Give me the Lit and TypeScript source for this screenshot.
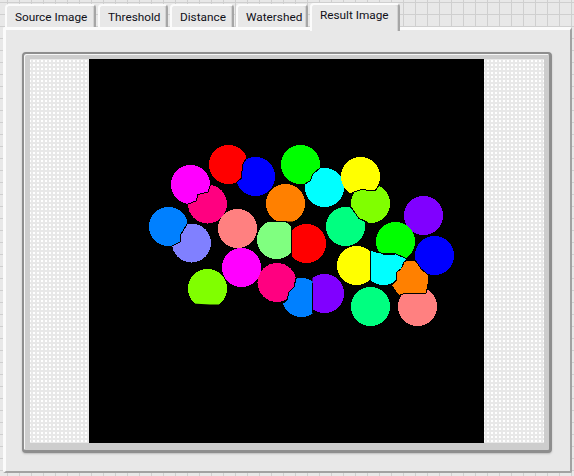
import { LitElement, html, svg, css } from "lit";
import { customElement } from "lit/decorators.js";

type Pt = [number, number];
const mk = (line: Pt[], a: Pt[], b: Pt[]) => ({ line, a: [...line, ...a], b: [...line, ...b] });

const redBlue = mk([[249, 152], [246.5, 158], [242.5, 165], [241.5, 178], [237, 182], [232, 186]], [[170, 186], [170, 120], [249, 120]], [[232, 230], [330, 230], [330, 120], [249, 120]]);
const magPink = mk([[213, 180], [210.5, 185], [208, 192], [198, 194.5], [196, 201], [188, 204], [182, 208]], [[140, 208], [140, 150], [213, 150]], [[182, 260], [260, 260], [260, 180]]);
const azPeri = mk([[189, 220], [186.5, 225], [180.5, 235], [180, 242], [172, 246], [168, 250]], [[130, 250], [130, 190], [189, 190]], [[168, 280], [230, 280], [230, 220]]);
const grnCyan = mk([[325, 165], [320, 168], [313, 174], [310, 181], [305, 184], [300, 188]], [[260, 188], [260, 130], [325, 130]], [[300, 230], [360, 230], [360, 165]]);
const yelLime = mk([[348, 195], [353, 192.5], [361.5, 189.5], [375, 191], [378, 187], [382, 182]], [[382, 140], [320, 140], [320, 195]], [[410, 182], [410, 240], [348, 240]]);
const limeSpr = mk([[347, 202], [351, 207], [356.5, 215], [359, 218.5], [365, 221], [370, 224]], [[410, 224], [410, 170], [347, 170]], [[370, 260], [300, 260], [300, 202]]);
const orLg = mk([[262, 221.5], [292, 221.5]], [[330, 221.5], [330, 170], [250, 170], [250, 221.5]], [[330, 221.5], [330, 270], [250, 270], [250, 221.5]]);
const lgRed = mk([[291.5, 215], [291.5, 270]], [[250, 270], [250, 215]], [[330, 270], [330, 215]]);
const pinkAz = mk([[298, 272], [296, 278], [294, 287], [289, 292], [287, 300], [282, 304], [278, 308]], [[240, 308], [240, 250], [298, 250]], [[278, 330], [340, 330], [340, 272]]);
const azPur = mk([[312.5, 270], [312.5, 325]], [[270, 325], [270, 270]], [[350, 325], [350, 270]]);
const yelCy = mk([[370.5, 240], [370.5, 295]], [[330, 295], [330, 240]], [[415, 295], [415, 240]]);
const grnCy = mk([[370, 250], [374, 251.5], [383, 253.5], [395, 253.5], [406, 258.5]], [[425, 258.5], [425, 215], [370, 215]], [[425, 258.5], [425, 300], [370, 300]]);

const cyanExtra: Pt[] = [[392, 254], [395, 254], [406, 259], [402, 268], [397, 272], [392, 272]];
const orangePoly: Pt[] = [[404, 262], [407, 260], [415, 260], [418, 264], [421, 269], [425, 272], [429, 275.5], [428.5, 282], [427, 289], [426, 293.5], [404, 293.5], [399.5, 295.5], [396, 292], [391.5, 285], [396.5, 280], [397, 272], [401.5, 268.5]];

type Disc = { x: number; y: number; c: string; clips?: Pt[][] };
const discs: Disc[] = [
  { x: 228.5, y: 164.5, c: "#ff0000", clips: [redBlue.a] },
  { x: 255.5, y: 176.5, c: "#0000ff", clips: [redBlue.b] },
  { x: 300.5, y: 164.5, c: "#00ff00", clips: [grnCyan.a] },
  { x: 190.5, y: 184.5, c: "#ff00ff", clips: [magPink.a] },
  { x: 207.5, y: 204, c: "#ff0080", clips: [magPink.b] },
  { x: 285.5, y: 203.5, c: "#ff8000", clips: [orLg.a] },
  { x: 168.5, y: 226.5, c: "#0080ff", clips: [azPeri.a] },
  { x: 191.5, y: 243, c: "#8080ff", clips: [azPeri.b] },
  { x: 237.5, y: 228.5, c: "#ff8080" },
  { x: 276.5, y: 239.5, c: "#80ff80", clips: [orLg.b, lgRed.a] },
  { x: 306.5, y: 243.5, c: "#ff0000", clips: [lgRed.b] },
  { x: 324.5, y: 187.5, c: "#00ffff", clips: [grnCyan.b] },
  { x: 360.5, y: 176.5, c: "#ffff00", clips: [yelLime.a] },
  { x: 370.5, y: 203.5, c: "#80ff00", clips: [yelLime.b, limeSpr.a] },
  { x: 345.5, y: 226.5, c: "#00ff80", clips: [limeSpr.b] },
  { x: 423.5, y: 215.5, c: "#8000ff" },
  { x: 395.5, y: 241.5, c: "#00ff00", clips: [grnCy.a] },
  { x: 434.5, y: 255.5, c: "#0000ff" },
  { x: 356.5, y: 265.5, c: "#ffff00", clips: [yelCy.a] },
  { x: 383.5, y: 265.5, c: "#00ffff", clips: [yelCy.b, grnCy.b] },
  { x: 417.5, y: 306.5, c: "#ff8080" },
  { x: 370.5, y: 306.5, c: "#00ff80" },
  { x: 324.5, y: 293.5, c: "#8000ff", clips: [azPur.b] },
  { x: 301.5, y: 297.5, c: "#0080ff", clips: [pinkAz.b, azPur.a] },
  { x: 277, y: 282.5, c: "#ff0080", clips: [pinkAz.a] },
  { x: 241.5, y: 267.5, c: "#ff00ff" },
  { x: 207.5, y: 288.5, c: "#80ff00", clips: [[[180, 302.5], [193, 302.5], [193, 303.5], [210, 304.5], [235, 304.5], [235, 260], [180, 260]]] },
];

const lines: Pt[][] = [
  redBlue.line,
  magPink.line,
  azPeri.line,
  grnCyan.line,
  yelLime.line,
  limeSpr.line,
  pinkAz.line,
  grnCy.line,
  [[291.5, 222], [291.5, 261]],
  [[312.5, 283], [312.5, 313]],
  [[370.5, 250], [370.5, 284]],
  [[268, 221.5], [287, 221.5]],
  [[383, 254.5], [395, 254.5]],
];
const str = (p: Pt[]) => p.map((q) => q.join(",")).join(" ");

const R = 19.5;
const drawDisc = (d: Disc, i: number) => {
  let node = svg`<circle cx=${d.x} cy=${d.y} r=${R} fill=${d.c}></circle>`;
  (d.clips ?? []).forEach((_, k) => {
    node = svg`<g clip-path=${`url(#c${i}-${k})`}>${node}</g>`;
  });
  return node;
};

@customElement("app-root")
export class AppRoot extends LitElement {
  static styles = css`
    :host {
      display: block;
      width: 574px;
      height: 476px;
      overflow: hidden;
      font-family: Roboto, Tahoma, sans-serif;
      background-color: #e8e8e8;
      background-image:
        linear-gradient(#cfcfcf 1px, transparent 1px),
        linear-gradient(90deg, #cfcfcf 1px, transparent 1px);
      background-size: 12px 12px;
      background-position: 7px 2px;
    }
    .wrap {
      display: flex;
      flex-direction: column;
      padding: 3px 2px 0 3px;
      height: 473px;
      box-sizing: border-box;
    }
    .tabs {
      display: flex;
      align-items: flex-end;
      gap: 2px;
      padding-left: 2px;
      height: 24px;
      position: relative;
      z-index: 1;
    }
    .tab {
      box-sizing: border-box;
      height: 23px;
      display: flex;
      align-items: center;
      padding-left: 8px;
      background: #e8e8e8;
      color: #101018;
      font-size: 11.8px;
      border-top: 2px solid #fbfbfb;
      border-left: 2px solid #fbfbfb;
      border-right: 2px solid #a6a6a6;
      border-radius: 4px 4px 0 0;
      box-shadow: inset -1px 0 0 #d2d2d2;
    }
    .tab.active {
      height: 28px;
      margin-bottom: -4px;
      padding-bottom: 7px;
    }
    .panel {
      flex: 1;
      box-sizing: border-box;
      background: #e8e8e8;
      border-top: 3px solid #fbfbfb;
      border-left: 3px solid #fbfbfb;
      border-right: 2px solid #a2a2a2;
      border-bottom: 2px solid #a2a2a2;
      border-radius: 2px;
      padding: 22px 18px 18px 16px;
      display: flex;
    }
    .frame {
      flex: 1;
      box-sizing: border-box;
      display: flex;
      background: #cdcdcd;
      border-top: 2px solid #8e8e8e;
      border-left: 2px solid #8e8e8e;
      border-right: 3px solid #8e8e8e;
      border-bottom: 3px solid #8e8e8e;
      border-radius: 4px;
      padding: 5px 5px 7px 6px;
      box-shadow: 0 1px 2px #bdbdbd, inset 1px 1px 0 #f6f6f6;
    }
    .dots {
      flex: 1;
      background-color: #e8e8e8;
      background-image: conic-gradient(#fff 0 25%, transparent 0 100%);
      background-size: 4px 4px;
      background-position: 1px 1px;
    }
    .dots.first {
      flex: 0 0 59px;
    }
    svg {
      display: block;
      width: 395px;
      height: 384px;
      flex: none;
    }
  `;

  render() {
    const tabs: [string, number][] = [
      ["Source Image", 91],
      ["Threshold", 70],
      ["Distance", 64],
      ["Watershed", 72],
      ["Result Image", 90],
    ];
    return html`<div class="wrap">
      <div class="tabs">
        ${tabs.map(
          ([t, w], i) =>
            html`<div class="tab ${i === 4 ? "active" : ""}" style="width:${w}px">${t}</div>`
        )}
      </div>
      <div class="panel">
        <div class="frame">
          <div class="dots first"></div>
          <svg viewBox="89 59 395 384" shape-rendering="crispEdges">
            <rect x="89" y="59" width="395" height="384" fill="#000"></rect>
            <defs>
              ${discs.map((d, i) =>
                (d.clips ?? []).map(
                  (p, k) =>
                    svg`<clipPath id=${`c${i}-${k}`}><polygon points=${str(p)}></polygon></clipPath>`
                )
              )}
            </defs>
            ${discs.map(drawDisc)}
            <polygon points=${str(cyanExtra)} fill="#00ffff"></polygon>
            ${lines.map(
              (l) =>
                svg`<polyline points=${str(l)} fill="none" stroke="#000" stroke-width="1"></polyline>`
            )}
            <polygon points=${str(orangePoly)} fill="#ff8000" stroke="#000" stroke-width="1"></polygon>
          </svg>
          <div class="dots"></div>
        </div>
      </div>
    </div>`;
  }
}
